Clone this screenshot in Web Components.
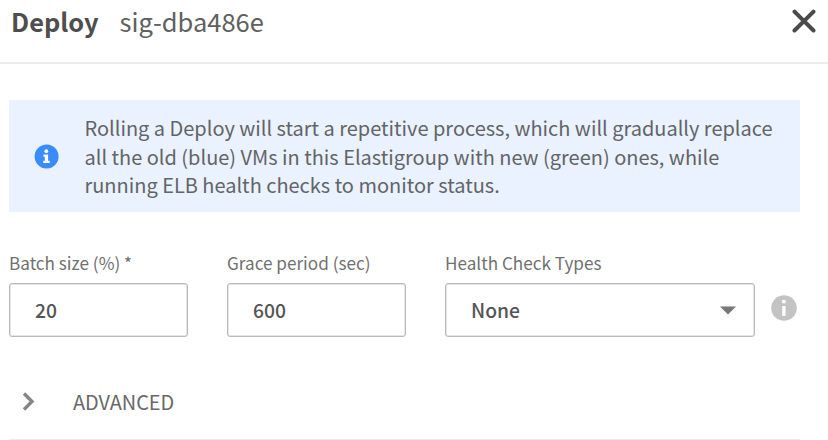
<!DOCTYPE html>
<html lang="en">
<head>
<meta charset="utf-8">
<title>Deploy</title>
<style>
html,body{margin:0;background:#fff}
body{width:828px;height:440px;overflow:hidden;font-family:"Noto Sans CJK SC","Noto Sans",sans-serif;color:#555}
</style>
</head>
<body>
<deploy-dialog></deploy-dialog>
<script>
const define = (name, html) => customElements.define(name, class extends HTMLElement {
  constructor() {
    super();
    this.attachShadow({ mode: 'open' }).innerHTML = html;
  }
});

define('dialog-header', `
<style>
:host{display:flex;height:62px;border-bottom:2px solid #ebebeb;box-sizing:content-box;line-height:42px;color:#4e4e4e;padding-left:11px}
.title{font-size:25.4px;font-weight:700;width:108.6px;white-space:nowrap}
.sub{font-size:25.5px;flex:1;white-space:nowrap;color:#606060}
svg{display:block;margin:9px 12px 0 0}
</style>
<span class="title"><slot name="title"></slot></span><span class="sub"><slot></slot></span>
<svg width="24" height="24" viewBox="0 0 24 24"><path d="M2.5 2.7L21.5 21.5M21.5 2.7L2.5 21.5" stroke="#4a4a4a" stroke-width="4" stroke-linecap="round"/></svg>`);

define('info-banner', `
<style>
:host{display:flex;align-items:center;height:112px;background:#eaf2ff;margin-top:36px}
svg{display:block;margin:1px 25.5px 0 25px}
p{margin:2px 0 0;font-size:19.98px;line-height:28.75px;color:#626466;white-space:nowrap}
</style>
<svg width="25" height="25" viewBox="0 0 25 25"><circle cx="12.6" cy="12.5" r="12" fill="#3a8bfd"/><circle cx="12.3" cy="7.2" r="1.9" fill="#fff"/><path d="M9.4 10.4h4.7v6.4h1.6v2.3H9.2v-2.3h1.6v-4.1H9.4z" fill="#fff"/></svg>
<p><slot></slot></p>`);

define('form-field', `
<style>
:host{display:block}
label{display:block;font-size:17.15px;line-height:24px;color:#707070;white-space:nowrap}
.box{display:flex;align-items:center;justify-content:space-between;box-sizing:border-box;height:54px;margin-top:8px;border:1px solid #bababa;border-radius:3px;box-shadow:inset 0 0 0 .5px #ccc;padding:0 18px 0 25px;font-size:19.3px;font-weight:500;line-height:52px;color:#555}
</style>
<label><slot name="label"></slot></label>
<div class="box"><slot></slot><slot name="icon"></slot></div>`);

define('caret-down', `
<style>:host{display:block}svg{display:block}</style>
<svg width="16" height="9" viewBox="0 0 16 9"><path d="M0 .5h16L8 8.5z" fill="#777"/></svg>`);

define('help-icon', `
<style>:host{display:block}svg{display:block}</style>
<svg width="26" height="26" viewBox="0 0 26 26"><circle cx="13" cy="13" r="12.8" fill="#c3c3c3"/><path d="M11.2 5h3.4v3.3h-3.4zM11.2 11h3.4v10h-3.4z" fill="#fff"/></svg>`);

define('advanced-section', `
<style>
:host{display:flex;align-items:center;height:74px;border-bottom:1px solid #ececec;font-size:19.9px;line-height:30px;color:#686868}
svg{display:block;margin:0 38px 0 13px}
span{padding-bottom:1px}
</style>
<svg width="13" height="20" viewBox="0 0 13 20"><path d="M2 1.5l8 8-8 8" fill="none" stroke="#858585" stroke-width="3.4"/></svg>
<span><slot></slot></span>`);

define('deploy-dialog', `
<style>
:host{display:block}
main{margin:0 28px 0 9px}
.row{display:flex;margin-top:39px;gap:39px}
.n{width:179px}
.s{width:310px}
.row form-field{flex:none}
help-icon{margin:44px 0 0 -23px}
advanced-section{margin-top:28px}
</style>
<dialog-header><span slot="title">Deploy</span>sig-dba486e</dialog-header>
<main>
<info-banner>Rolling a Deploy will start a repetitive process, which will gradually replace<br>all the old (blue) VMs in this Elastigroup with new (green) ones, while<br>running ELB health checks to monitor status.</info-banner>
<div class="row">
<form-field class="n"><span slot="label">Batch size (%) *</span>20</form-field>
<form-field class="n"><span slot="label">Grace period (sec)</span>600</form-field>
<form-field class="s"><span slot="label">Health Check Types</span>None<caret-down slot="icon"></caret-down></form-field>
<help-icon></help-icon>
</div>
<advanced-section>ADVANCED</advanced-section>
</main>`);
</script>
</body>
</html>
